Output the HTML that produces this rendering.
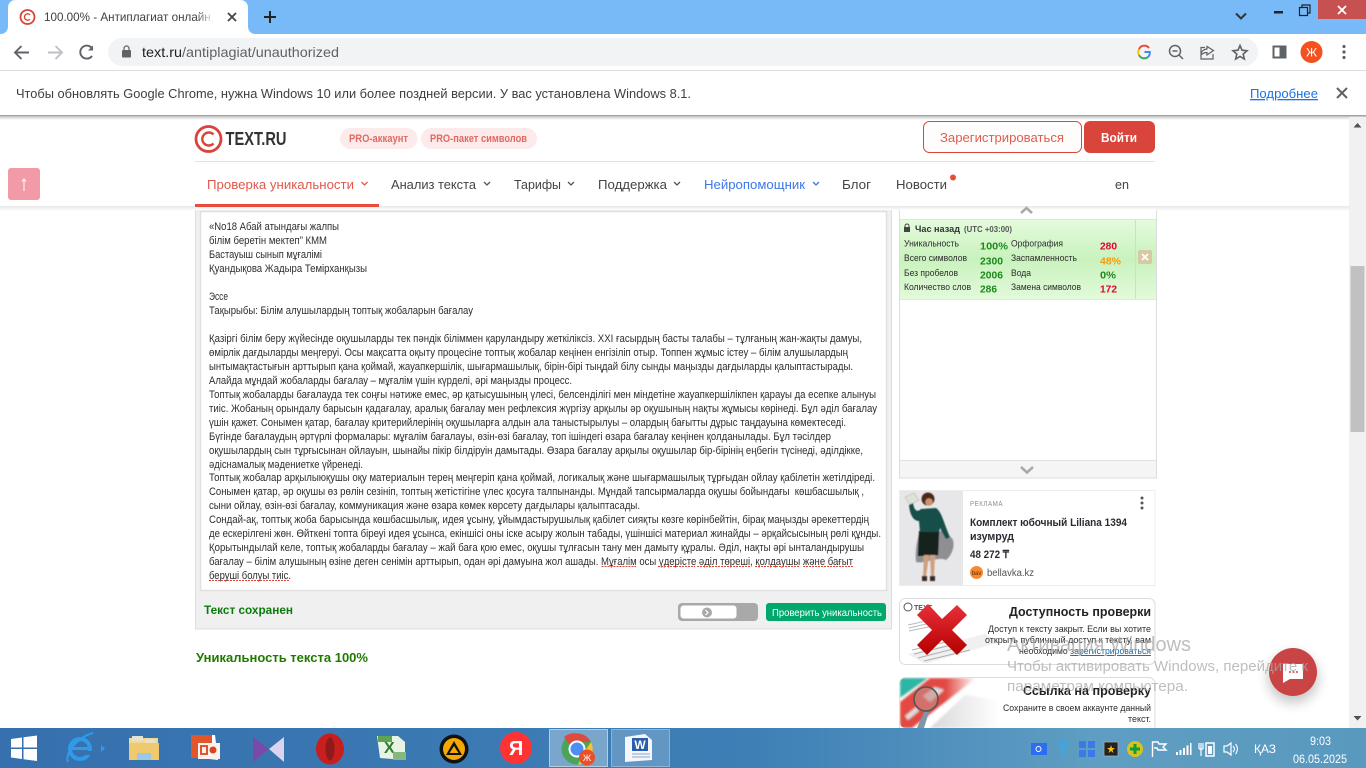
<!DOCTYPE html>
<html lang="ru"><head><meta charset="utf-8"><title>100.00% - Антиплагиат онлайн</title>
<style>
html,body{margin:0;padding:0;width:1366px;height:768px;overflow:hidden;background:#fff}
svg{display:block}
text{font-family:"Liberation Sans",sans-serif;white-space:pre}
.b text{font-size:10.6px;fill:#2e2e2e}
.n text{font-size:13px;fill:#444}
.s text{font-size:9.6px;fill:#2b2b2b}
.v text{font-size:10.5px;font-weight:bold}
.r text{font-size:9.6px;fill:#2b2b2b}
.w text{fill:#a8a8a8;fill-opacity:.75}
</style></head><body>
<svg width="1366" height="768" viewBox="0 0 1366 768" xmlns="http://www.w3.org/2000/svg">
<defs>
<linearGradient id="sh" x1="0" y1="0" x2="0" y2="1"><stop offset="0" stop-color="#8f8f8f"/><stop offset=".35" stop-color="#cfcfcf"/><stop offset="1" stop-color="#fff"/></linearGradient>
<linearGradient id="ns" x1="0" y1="0" x2="0" y2="1"><stop offset="0" stop-color="#e6e6e6"/><stop offset="1" stop-color="#fff"/></linearGradient>
<linearGradient id="gr" x1="0" y1="0" x2="0" y2="1"><stop offset="0" stop-color="#e4fbdc"/><stop offset=".5" stop-color="#c9f2bd"/><stop offset="1" stop-color="#e2fada"/></linearGradient>
<linearGradient id="tb" x1="0" y1="0" x2="1" y2="0"><stop offset="0" stop-color="#3670ae"/><stop offset=".55" stop-color="#3e7fb6"/><stop offset=".8" stop-color="#5f9ec2"/><stop offset="1" stop-color="#5a99bf"/></linearGradient>
<linearGradient id="fade" x1="0" y1="0" x2="1" y2="0"><stop offset="0" stop-color="#fff" stop-opacity="0"/><stop offset="1" stop-color="#fff"/></linearGradient>
<linearGradient id="xr" x1="0" y1="0" x2="0" y2="1"><stop offset="0" stop-color="#e8303a"/><stop offset="1" stop-color="#b40000"/></linearGradient>
<linearGradient id="band" x1="0" y1="0" x2="1" y2="0"><stop offset="0" stop-color="#e24a42"/><stop offset=".6" stop-color="#e24a42"/><stop offset="1" stop-color="#e24a42" stop-opacity="0"/></linearGradient>
<linearGradient id="gry" x1="0" y1="0" x2="1" y2="0"><stop offset="0" stop-color="#c8c8c8"/><stop offset="1" stop-color="#fff"/></linearGradient>
<filter id="chs" x="-50%" y="-50%" width="200%" height="200%"><feGaussianBlur stdDeviation="6"/></filter>
<filter id="bl" x="-20%" y="-20%" width="140%" height="140%"><feGaussianBlur stdDeviation=".6"/></filter>
<filter id="bl2" x="-20%" y="-20%" width="140%" height="140%"><feGaussianBlur stdDeviation="1"/></filter>
<clipPath id="c2"><rect x="900" y="599" width="100" height="64" rx="5"/></clipPath>
<clipPath id="c3"><rect x="900" y="678" width="100" height="50" rx="5"/></clipPath>
</defs>

<!-- Tab strip -->
<rect width="1366" height="34" fill="#78b9f8"/>
<path d="M0 34 C6 34 8 30 8 26 V8 C8 3 11 0 16 0 H240 C245 0 248 3 248 8 V26 C248 30 250 34 256 34 Z" fill="#fff"/>
<circle cx="27.500" cy="17" r="7" fill="none" stroke="#d9433a" stroke-width="1.800"/>
<path d="M30 14.800 A3.200 3.200 0 1 0 30 19.200" fill="none" stroke="#d9433a" stroke-width="1.400"/>
<text x="44" y="21" font-size="12" fill="#3c4043" textLength="170" lengthAdjust="spacingAndGlyphs">100.00% - Антиплагиат онлайн,</text>
<rect x="196" y="8" width="18" height="18" fill="url(#fade)"/>
<path d="M228 13 L236 21 M236 13 L228 21" stroke="#444" stroke-width="1.800"/>
<path d="M270 11 V23 M264 17 H276" stroke="#222" stroke-width="2"/>
<path d="M1236 13.500 L1241 18.500 L1246 13.500" fill="none" stroke="#333" stroke-width="2"/>
<rect x="1274" y="11" width="9" height="2.500" fill="#222"/>
<path d="M1299.500 7.500 H1307.500 V15.500 H1299.500 Z M1302 7.500 V5 H1310 V13 H1307.500" fill="none" stroke="#222" stroke-width="1.200"/>
<rect x="1318" y="0" width="48" height="19" fill="#c75050"/>
<path d="M1338 6 L1346 14 M1346 6 L1338 14" stroke="#fff" stroke-width="1.800"/>

<!-- Toolbar -->
<rect y="34" width="1366" height="36" fill="#fff"/>
<rect y="70" width="1366" height="1" fill="#dadce0"/>
<path d="M29 52.500 H15 M21.500 46 L15 52.500 L21.500 59" fill="none" stroke="#5f6368" stroke-width="1.900"/>
<path d="M48 52.500 H62 M55.500 46 L62 52.500 L55.500 59" fill="none" stroke="#bdc1c6" stroke-width="1.900"/>
<path d="M92 56 A6.500 6.500 0 1 1 92.500 49" fill="none" stroke="#5f6368" stroke-width="1.900"/><path d="M93 45.500 V50.500 H88 Z" fill="#5f6368"/>
<rect x="108" y="38" width="1150" height="28" rx="14" fill="#f1f3f4"/>
<rect x="122" y="50" width="9" height="7.500" rx="1" fill="#5f6368"/><path d="M124 50 V48.500 A2.500 2.500 0 0 1 129 48.500 V50" fill="none" stroke="#5f6368" stroke-width="1.200"/>
<text x="142" y="57" font-size="14" fill="#5f6368" textLength="197" lengthAdjust="spacingAndGlyphs"><tspan fill="#202124">text.ru</tspan>/antiplagiat/unauthorized</text>
<!-- G -->
<path d="M1149 48 A5.800 5.800 0 0 0 1139 49.200" fill="none" stroke="#ea4335" stroke-width="1.900"/>
<path d="M1139 49.200 A5.800 5.800 0 0 0 1139 55" fill="none" stroke="#fbbc05" stroke-width="1.900"/>
<path d="M1139 55 A5.800 5.800 0 0 0 1148 57" fill="none" stroke="#34a853" stroke-width="1.900"/>
<path d="M1148 57 A5.800 5.800 0 0 0 1149.800 52 H1144.500" fill="none" stroke="#4285f4" stroke-width="1.900"/>
<circle cx="1175" cy="51" r="5.500" fill="none" stroke="#5f6368" stroke-width="1.500"/><path d="M1179 55 L1183 59 M1172.500 51 H1177.500" stroke="#5f6368" stroke-width="1.500"/>
<path d="M1207 46.500 V49 C1203 49.500 1201 52 1201 55 C1203 53 1205 52.500 1207 52.500 V55 L1213.500 50.500 Z M1205 47.500 H1201 V59 H1213 V54" fill="none" stroke="#5f6368" stroke-width="1.200"/>
<path d="M1240 45.500 L1242 50.200 L1247 50.700 L1243.200 54 L1244.300 59 L1240 56.400 L1235.700 59 L1236.800 54 L1233 50.700 L1238 50.200 Z" fill="none" stroke="#5f6368" stroke-width="1.600"/>
<rect x="1273.500" y="46.500" width="12" height="11" fill="none" stroke="#5f6368" stroke-width="2"/><rect x="1279.500" y="46" width="6.500" height="12" fill="#5f6368"/>
<circle cx="1311.500" cy="52" r="11" fill="#f4511e"/>
<text x="1311.500" y="56.500" font-size="12" fill="#fff" text-anchor="middle">Ж</text>
<circle cx="1344" cy="46.500" r="1.600" fill="#5f6368"/><circle cx="1344" cy="52" r="1.600" fill="#5f6368"/><circle cx="1344" cy="57.500" r="1.600" fill="#5f6368"/>

<!-- Infobar -->
<text x="16" y="98" font-size="13" fill="#3c4043" textLength="675" lengthAdjust="spacingAndGlyphs">Чтобы обновлять Google Chrome, нужна Windows 10 или более поздней версии. У вас установлена Windows 8.1.</text>
<text x="1250" y="98" font-size="13" fill="#1a73e8" text-decoration="underline" textLength="68" lengthAdjust="spacingAndGlyphs">Подробнее</text>
<path d="M1337 88 L1347 98 M1347 88 L1337 98" stroke="#5f6368" stroke-width="2"/>
<rect y="115" width="1366" height="5" fill="url(#sh)"/>

<!-- Scrollbar -->
<rect x="1349" y="117" width="17" height="611" fill="#f1f1f1"/>
<rect x="1350.500" y="266" width="14" height="166" fill="#c1c1c1"/>
<path d="M1353.500 127.500 H1361.500 L1357.500 123 Z M1353.500 716 H1361.500 L1357.500 720.500 Z" fill="#505050"/>

<!-- Logo and header -->
<circle cx="208.500" cy="139" r="12.500" fill="none" stroke="#d9433a" stroke-width="2.800"/>
<path d="M213.500 134.500 A6.500 6.500 0 1 0 213.500 143.500" fill="none" stroke="#d9433a" stroke-width="2.400"/>
<text x="225.500" y="145" font-size="18" font-weight="bold" fill="#333" textLength="61" lengthAdjust="spacingAndGlyphs">TEXT.RU</text>
<rect x="340" y="128" width="77.500" height="21" rx="10.500" fill="#fdeaea"/>
<rect x="421" y="128" width="116" height="21" rx="10.500" fill="#fdeaea"/>
<text x="349" y="142" font-size="11" font-weight="bold" fill="#e06a63" textLength="59" lengthAdjust="spacingAndGlyphs">PRO-аккаунт</text>
<text x="430" y="142" font-size="11" font-weight="bold" fill="#e06a63" textLength="97" lengthAdjust="spacingAndGlyphs">PRO-пакет символов</text>
<rect x="923.500" y="121.500" width="158" height="31" rx="6" fill="#fffdfb" stroke="#d9453a"/>
<text x="940" y="142" font-size="13" fill="#e25b50" textLength="124" lengthAdjust="spacingAndGlyphs">Зарегистрироваться</text>
<rect x="1084" y="121" width="71" height="32" rx="6" fill="#d9453a"/>
<text x="1101" y="142" font-size="12.500" font-weight="bold" fill="#fff" textLength="36" lengthAdjust="spacingAndGlyphs">Войти</text>
<rect x="195" y="161" width="960" height="1" fill="#e2e2e2"/>

<!-- Nav -->
<g class="n">
<text x="207" y="189" style="fill:#e0584c" textLength="147" lengthAdjust="spacingAndGlyphs">Проверка уникальности</text>
<text x="391" y="189" textLength="85" lengthAdjust="spacingAndGlyphs">Анализ текста</text>
<text x="514" y="189" textLength="47" lengthAdjust="spacingAndGlyphs">Тарифы</text>
<text x="598" y="189" textLength="69" lengthAdjust="spacingAndGlyphs">Поддержка</text>
<text x="704" y="189" style="fill:#3b78e7" textLength="101" lengthAdjust="spacingAndGlyphs">Нейропомощник</text>
<text x="842" y="189" textLength="29" lengthAdjust="spacingAndGlyphs">Блог</text>
<text x="896" y="189" textLength="51" lengthAdjust="spacingAndGlyphs">Новости</text>
<text x="1115" y="189" textLength="14" lengthAdjust="spacingAndGlyphs">en</text>
</g>
<path d="M361.500 182 L364.500 185 L367.500 182" fill="none" stroke="#e0584c" stroke-width="1.300"/>
<path d="M484 182 L487 185 L490 182 M568 182 L571 185 L574 182 M674 182 L677 185 L680 182" fill="none" stroke="#555" stroke-width="1.300"/>
<path d="M813 182 L816 185 L819 182" fill="none" stroke="#3b78e7" stroke-width="1.300"/>
<circle cx="953" cy="177.500" r="3" fill="#e74c3c"/>
<rect x="8" y="168" width="32" height="32" rx="3" fill="#f39aa8"/>
<path d="M24 191 V179 M22 181.500 L24 179 L26 181.500" fill="none" stroke="#fff" stroke-width="1"/>
<rect y="206" width="1349" height="5" fill="url(#ns)"/>

<!-- Main panel -->
<rect x="195.500" y="208" width="696" height="421" fill="#f0f0f0" stroke="#dedede"/>
<rect x="200.500" y="211.500" width="686" height="379" fill="#fff" stroke="#e0e0e0" stroke-width="1.500"/>
<rect x="195" y="206" width="697" height="4" fill="url(#ns)"/>
<rect x="195" y="204" width="184" height="3" fill="#e74c3c"/>

<g class="b">
<text x="209" y="230" textLength="130" lengthAdjust="spacingAndGlyphs">«No18 Абай атындағы жалпы</text>
<text x="209" y="244" textLength="118" lengthAdjust="spacingAndGlyphs">білім беретін мектеп” КММ</text>
<text x="209" y="258" textLength="113" lengthAdjust="spacingAndGlyphs">Бастауыш сынып мұғалімі</text>
<text x="209" y="272" textLength="158" lengthAdjust="spacingAndGlyphs">Қуандықова Жадыра Темірханқызы</text>
<text x="209" y="300" textLength="19" lengthAdjust="spacingAndGlyphs">Эссе</text>
<text x="209" y="314" textLength="264" lengthAdjust="spacingAndGlyphs">Тақырыбы: Білім алушылардың топтық жобаларын бағалау</text>
<text x="209" y="342" textLength="653" lengthAdjust="spacingAndGlyphs">Қазіргі білім беру жүйесінде оқушыларды тек пәндік біліммен қаруландыру жеткіліксіз. XXI ғасырдың басты талабы – тұлғаның жан-жақты дамуы,</text>
<text x="209" y="356" textLength="639" lengthAdjust="spacingAndGlyphs">өмірлік дағдыларды меңгеруі. Осы мақсатта оқыту процесіне топтық жобалар кеңінен енгізіліп отыр. Топпен жұмыс істеу – білім алушылардың</text>
<text x="209" y="370" textLength="644" lengthAdjust="spacingAndGlyphs">ынтымақтастығын арттырып қана қоймай, жауапкершілік, шығармашылық, бірін-бірі тыңдай білу сынды маңызды дағдыларды қалыптастырады.</text>
<text x="209" y="384" textLength="363" lengthAdjust="spacingAndGlyphs">Алайда мұндай жобаларды бағалау – мұғалім үшін күрделі, әрі маңызды процесс.</text>
<text x="209" y="398" textLength="667" lengthAdjust="spacingAndGlyphs">Топтық жобаларды бағалауда тек соңғы нәтиже емес, әр қатысушының үлесі, белсенділігі мен міндетіне жауапкершілікпен қарауы да есепке алынуы</text>
<text x="209" y="412" textLength="668" lengthAdjust="spacingAndGlyphs">тиіс. Жобаның орындалу барысын қадағалау, аралық бағалау мен рефлексия жүргізу арқылы әр оқушының нақты жұмысы көрінеді. Бұл әділ бағалау</text>
<text x="209" y="426" textLength="637" lengthAdjust="spacingAndGlyphs">үшін қажет. Сонымен қатар, бағалау критерийлерінің оқушыларға алдын ала таныстырылуы – олардың бағытты дұрыс таңдауына көмектеседі.</text>
<text x="209" y="440" textLength="622" lengthAdjust="spacingAndGlyphs">Бүгінде бағалаудың әртүрлі формалары: мұғалім бағалауы, өзін-өзі бағалау, топ ішіндегі өзара бағалау кеңінен қолданылады. Бұл тәсілдер</text>
<text x="209" y="454" textLength="654" lengthAdjust="spacingAndGlyphs">оқушылардың сын тұрғысынан ойлауын, шынайы пікір білдіруін дамытады. Өзара бағалау арқылы оқушылар бір-бірінің еңбегін түсінеді, әділдікке,</text>
<text x="209" y="468" textLength="154" lengthAdjust="spacingAndGlyphs">әдіснамалық мәдениетке үйренеді.</text>
<text x="209" y="481" textLength="666" lengthAdjust="spacingAndGlyphs">Топтық жобалар арқылыюқушы оқу материалын терең меңгеріп қана қоймай, логикалық және шығармашылық тұрғыдан ойлау қабілетін жетілдіреді.</text>
<text x="209" y="495" textLength="655" lengthAdjust="spacingAndGlyphs">Сонымен қатар, әр оқушы өз рөлін сезініп, топтың жетістігіне үлес қосуға талпынанды. Мұндай тапсырмаларда оқушы бойындағы  көшбасшылық ,</text>
<text x="209" y="509" textLength="431" lengthAdjust="spacingAndGlyphs">сыни ойлау, өзін-өзі бағалау, коммуникация және өзара көмек көрсету дағдылары қалыптасады.</text>
<text x="209" y="523" textLength="660" lengthAdjust="spacingAndGlyphs">Сондай-ақ, топтық жоба барысында көшбасшылық, идея ұсыну, ұйымдастырушылық қабілет сияқты көзге көрінбейтін, бірақ маңызды әрекеттердің</text>
<text x="209" y="537" textLength="672" lengthAdjust="spacingAndGlyphs">де ескерілгені жөн. Өйткені топта біреуі идея ұсынса, екіншісі оны іске асыру жолын табады, үшіншісі материал жинайды – әрқайсысының рөлі құнды.</text>
<text x="209" y="551" textLength="655" lengthAdjust="spacingAndGlyphs">Қорытындылай келе, топтық жобаларды бағалау – жай баға қою емес, оқушы тұлғасын тану мен дамыту құралы. Әділ, нақты әрі ынталандырушы</text>
<text x="209" y="565" textLength="644" lengthAdjust="spacingAndGlyphs">бағалау – білім алушының өзіне деген сенімін арттырып, одан әрі дамуына жол ашады. Мұғалім осы үдерісте әділ төреші, қолдаушы және бағыт</text>
<text x="209" y="579" textLength="82" lengthAdjust="spacingAndGlyphs">беруші болуы тиіс.</text>
</g>
<path d="M601.500 566.500 H636 M658 566.500 H695 M697 566.500 H750 M755 566.500 H799 M803 566.500 H853 M209 580.500 H289" stroke="#e0443a" stroke-width="1" stroke-dasharray="2 1" fill="none"/>

<text x="204" y="614" font-size="11.500" font-weight="bold" fill="#0a7a0a" textLength="89" lengthAdjust="spacingAndGlyphs">Текст сохранен</text>
<rect x="678" y="603" width="80" height="18" rx="4" fill="#a9a9a9"/>
<rect x="680.500" y="605.500" width="56" height="13" rx="3" fill="#fff"/>
<circle cx="707" cy="612.500" r="5" fill="#a9a9a9"/><path d="M705.500 610 L708 612.500 L705.500 615" fill="none" stroke="#fff" stroke-width="1.200"/>
<rect x="766" y="603" width="120" height="18" rx="3" fill="#00a86b"/>
<text x="772" y="616" font-size="10.500" fill="#fff" textLength="110" lengthAdjust="spacingAndGlyphs">Проверить уникальность</text>
<text x="196" y="662" font-size="13" font-weight="bold" fill="#1f7a00" textLength="172" lengthAdjust="spacingAndGlyphs">Уникальность текста 100%</text>

<!-- Right widget -->
<rect x="899.500" y="207" width="257" height="271" fill="#fff" stroke="#dedede"/>
<rect x="899" y="206" width="258" height="4" fill="url(#ns)"/>
<path d="M1021 213 L1026.500 208 L1032 213" fill="none" stroke="#aaa" stroke-width="2.600"/>
<rect x="900" y="220" width="256" height="79" fill="url(#gr)"/>
<rect x="900" y="219" width="256" height="1" fill="#d9e8d4"/><rect x="900" y="299" width="256" height="1" fill="#e6e6e6"/>
<rect x="1135" y="220" width="1" height="79" fill="#c9e2c2"/>
<rect x="1138" y="250" width="14" height="14" rx="2" fill="#d6c9a4"/>
<path d="M1142 254 L1148 260 M1148 254 L1142 260" stroke="#fff" stroke-width="1.800"/>
<rect x="904" y="227" width="6" height="5" fill="#444"/><path d="M905 227 V226 A2 2 0 0 1 909 226 V227" fill="none" stroke="#444" stroke-width="1"/>
<text x="915" y="232" font-size="9.500" font-weight="bold" fill="#333" textLength="45" lengthAdjust="spacingAndGlyphs">Час назад</text>
<text x="964" y="232" font-size="8" font-weight="bold" fill="#555" textLength="48" lengthAdjust="spacingAndGlyphs">(UTC +03:00)</text>
<g class="s">
<text x="904" y="246.500" textLength="55" lengthAdjust="spacingAndGlyphs">Уникальность</text>
<text x="904" y="261" textLength="63" lengthAdjust="spacingAndGlyphs">Всего символов</text>
<text x="904" y="276" textLength="54" lengthAdjust="spacingAndGlyphs">Без пробелов</text>
<text x="904" y="290" textLength="67" lengthAdjust="spacingAndGlyphs">Количество слов</text>
<text x="1011" y="246.500" textLength="52" lengthAdjust="spacingAndGlyphs">Орфография</text>
<text x="1011" y="261" textLength="66" lengthAdjust="spacingAndGlyphs">Заспамленность</text>
<text x="1011" y="276" textLength="20" lengthAdjust="spacingAndGlyphs">Вода</text>
<text x="1011" y="290" textLength="70" lengthAdjust="spacingAndGlyphs">Замена символов</text>
</g>
<g class="v">
<text x="980" y="249.500" fill="#1a8a1a" textLength="28" lengthAdjust="spacingAndGlyphs">100%</text>
<text x="980" y="264.500" fill="#1a8a1a" textLength="23" lengthAdjust="spacingAndGlyphs">2300</text>
<text x="980" y="278.500" fill="#1a8a1a" textLength="23" lengthAdjust="spacingAndGlyphs">2006</text>
<text x="980" y="292.500" fill="#1a8a1a" textLength="17" lengthAdjust="spacingAndGlyphs">286</text>
<text x="1100" y="249.500" fill="#e8002d" textLength="17" lengthAdjust="spacingAndGlyphs">280</text>
<text x="1100" y="264.500" fill="#f39c12" textLength="21" lengthAdjust="spacingAndGlyphs">48%</text>
<text x="1100" y="278.500" fill="#1a8a1a" textLength="16" lengthAdjust="spacingAndGlyphs">0%</text>
<text x="1100" y="292.500" fill="#e8002d" textLength="17" lengthAdjust="spacingAndGlyphs">172</text>
</g>
<rect x="900" y="461" width="256" height="16.500" fill="#f5f5f5"/><rect x="900" y="460" width="256" height="1" fill="#e2e2e2"/>
<path d="M1021 467 L1027 472.500 L1033 467" fill="none" stroke="#aaa" stroke-width="2.600"/>

<!-- Ad -->
<rect x="899.500" y="490.500" width="255.500" height="95" fill="#fff" stroke="#ececec"/>
<rect x="900" y="491" width="63" height="94" fill="#e7e7e9"/>
<g filter="url(#bl)">
<path d="M905 497 L914 493 L919 500 L910 505 Z" fill="#dfe2d6" stroke="#b5b8aa" stroke-width=".6"/>
<path d="M916 562 C915 550 917 540 920 531 L942 531 C948 534 952 538 953 540 C955 548 951 556 946 560 C938 556 926 564 916 562Z" fill="#3a3a3c" opacity=".5"/>
<path d="M919 531 L939 531 L938 555 L918 556 Z" fill="#15201f"/>
<path d="M909 505 L913 503 C914 510 917 513 921 509 L936 508 C942 512 944 524 950 537 L946 539 L940 528 L939 532 L920 532 L919 521 C914 521 910 516 909 505Z" fill="#17504a"/>
<circle cx="928" cy="499" r="6.500" fill="#4b2a1c"/>
<circle cx="929" cy="502" r="3.800" fill="#c9936f"/>
<path d="M924 555 L923 577 L926 577 L929 555 Z M930 555 L931 577 L934 577 L935 555Z" fill="#cfa07f"/>
<path d="M922 576 H927 V581 H922Z M930 576 H935 V581 H930Z" fill="#3a2c26"/>
</g>
<text x="970" y="506" font-size="7" fill="#8b8b99" letter-spacing=".6" textLength="33" lengthAdjust="spacingAndGlyphs">РЕКЛАМА</text>
<circle cx="1142" cy="498" r="1.500" fill="#555"/><circle cx="1142" cy="503" r="1.500" fill="#555"/><circle cx="1142" cy="508" r="1.500" fill="#555"/>
<text x="970" y="526" font-size="11" font-weight="bold" fill="#2b2b33" textLength="157" lengthAdjust="spacingAndGlyphs">Комплект юбочный Liliana 1394</text>
<text x="970" y="540" font-size="11" font-weight="bold" fill="#2b2b33" textLength="44" lengthAdjust="spacingAndGlyphs">изумруд</text>
<text x="970" y="558" font-size="11" font-weight="bold" fill="#2b2b33" textLength="39" lengthAdjust="spacingAndGlyphs">48 272 ₸</text>
<circle cx="976.500" cy="572.500" r="6.500" fill="#f78a2f"/>
<text x="976.500" y="575" font-size="6" fill="#5a2a10" text-anchor="middle">bav</text>
<text x="987" y="576" font-size="10" fill="#555" textLength="47" lengthAdjust="spacingAndGlyphs">bellavka.kz</text>

<!-- Card 2 -->
<rect x="899.500" y="598.500" width="255.500" height="66" rx="6" fill="#fff" stroke="#dcdcdc"/>
<g clip-path="url(#c2)">
<circle cx="908" cy="607" r="4" fill="none" stroke="#555" stroke-width="1"/>
<text x="914" y="610" font-size="7" font-weight="bold" fill="#555">TEXT</text>
<path d="M908 625 L935 619 M909 628 L935 622 M909 631 L933 626" stroke="#bbb" stroke-width="1"/>
<path d="M908 654 L985 634 L1000 642 L925 664 Z" fill="#f0f0f0"/>
<path d="M912 650 L950 641 M914 654 L960 643 M918 658 L965 646 M924 661 L970 650" stroke="#999" stroke-width="1" opacity=".75"/>
</g>
<path d="M928 604 L942 619 L957 605 L967 615 L952 630 L967 645 L957 655 L942 640 L927 655 L917 645 L932 630 L917 615 Z" fill="url(#xr)"/>
<text x="1151" y="616" text-anchor="end" font-size="13" font-weight="bold" fill="#222" textLength="142" lengthAdjust="spacingAndGlyphs">Доступность проверки</text>
<g class="r">
<text x="988" y="632" textLength="163" lengthAdjust="spacingAndGlyphs">Доступ к тексту закрыт. Если вы хотите</text>
<text x="985" y="643" textLength="166" lengthAdjust="spacingAndGlyphs">открыть публичный доступ к тексту, вам</text>
<text x="1019" y="654" textLength="132" lengthAdjust="spacingAndGlyphs">необходимо <tspan fill="#1a6aa5" text-decoration="underline">зарегистрироваться</tspan></text>
</g>

<!-- Card 3 -->
<path d="M899.500 728 V683 A6 6 0 0 1 905.500 677.500 H1149 A6 6 0 0 1 1155 683 V728" fill="#fff" stroke="#dcdcdc"/>
<g clip-path="url(#c3)"><g filter="url(#bl2)">
<path d="M930 728 L965 695 L1000 700 V728 Z" fill="url(#gry)" opacity=".7"/>
<path d="M900 678 H928 L900 698 Z" fill="#2fb5a4"/>
<path d="M900 702 L930 678 H976 L912 728 H900 Z" fill="url(#band)"/>
<path d="M905 716 L916 707 L919 711 L908 720 Z" fill="#ddd"/>
<path d="M923 696 L935 687 L944 690 L930 702 Z" fill="#ddd"/>
</g>
<circle cx="926" cy="699" r="12" fill="#c98a84" fill-opacity=".6" stroke="#555" stroke-width="1.600"/>
<path d="M924 712 L917 728 H924 L929 712 Z" fill="#7f96a6"/>
</g>
<text x="1151" y="695" text-anchor="end" font-size="13" font-weight="bold" fill="#222" textLength="128" lengthAdjust="spacingAndGlyphs">Ссылка на проверку</text>
<g class="r">
<text x="1003" y="711" textLength="148" lengthAdjust="spacingAndGlyphs">Сохраните в своем аккаунте данный</text>
<text x="1128" y="722" textLength="23" lengthAdjust="spacingAndGlyphs">текст.</text>
</g>

<!-- Chat -->
<circle cx="1293" cy="678" r="25" fill="#000" opacity=".22" filter="url(#chs)"/>
<circle cx="1293" cy="672" r="24" fill="#c94444"/>
<path d="M1283 664 H1303 V679 H1290 L1283 683 Z" fill="#fff"/>
<path d="M1289 672 H1291 M1292.500 672 H1294.500 M1296 672 H1298" stroke="#c94444" stroke-width="1.600"/>

<!-- Taskbar -->
<rect y="728" width="1366" height="40" fill="url(#tb)"/>
<path d="M11 739 L22 737.500 V747.500 H11 Z M23.500 737.300 L37 735.500 V747.500 H23.500 Z M11 749 H22 V759 L11 757.500 Z M23.500 749 H37 V761 L23.500 759.200 Z" fill="#fff"/>
<!-- IE -->
<ellipse cx="80" cy="749" rx="10" ry="10" fill="none" stroke="#2f9be8" stroke-width="4"/>
<rect x="70" y="747" width="20" height="3" fill="#2f9be8"/><rect x="80" y="751" width="13" height="4" fill="#3670ae"/>
<path d="M68 762 C64 752 80 736 93 733" fill="none" stroke="#2f9be8" stroke-width="2"/>
<path d="M101 745 L105 748.500 L101 752 Z" fill="#2f9be8"/>
<!-- Folder -->
<path d="M129 738 H158 V760 H129 Z" fill="#f2d98c"/>
<rect x="132" y="736" width="11" height="5" fill="#e6e2d0"/><rect x="145" y="739" width="10" height="4" fill="#e6e2d0"/>
<rect x="129" y="743" width="30" height="17" fill="#f0c96e"/>
<path d="M137 753 H151 V760 H137 Z" fill="#9cc8e8"/>
<!-- PPT -->
<path d="M192 735 H215 L218 760 L192 757 Z" fill="#fff"/>
<rect x="191" y="735" width="21" height="23" fill="#e2562c"/>
<rect x="198" y="743" width="22" height="16" fill="#fbf2ee"/>
<circle cx="213" cy="750" r="3.500" fill="#d9441e"/>
<path d="M201 746 H207 V754 H201 Z" fill="none" stroke="#d9441e" stroke-width="1.800"/>
<!-- KMP -->
<path d="M253 737 L269 749 L253 762 Z" fill="#7a4aa8"/><path d="M284 737 L269 749 L284 762 Z" fill="#dcd4ee"/>
<!-- Opera -->
<ellipse cx="330" cy="749" rx="14" ry="15.500" fill="#c81e1e"/><ellipse cx="330" cy="749" rx="4.500" ry="11.500" fill="#8e1a1a"/>
<!-- Excel -->
<path d="M377 736 H398 L405 742 V760 L380 758 Z" fill="#e9f3e3"/>
<path d="M378 736 H392 V742 H378Z" fill="#5da455"/>
<text x="384" y="753" font-size="16" font-weight="bold" fill="#2f7d2f" font-family="Liberation Serif">X</text>
<path d="M393 752 H406 V760 H393Z" fill="#85b77e"/>
<!-- AIMP -->
<circle cx="454" cy="749" r="14.500" fill="#111"/><circle cx="454" cy="749" r="11" fill="#f5a800"/>
<path d="M454 741 L462 755 H446 Z M454 746 L449.500 753 H458.500 Z" fill="#111" fill-rule="evenodd"/>
<!-- Yandex -->
<circle cx="516" cy="748" r="16" fill="#f33"/>
<text x="516" y="755" font-size="20" font-weight="bold" fill="#fff" text-anchor="middle">Я</text>
<!-- active boxes -->
<rect x="549.500" y="729.500" width="58" height="37" fill="#fff" fill-opacity=".32" stroke="#c9dbe9" stroke-opacity=".8"/>
<rect x="611.500" y="729.500" width="58" height="37" fill="#fff" fill-opacity=".2" stroke="#b9cfe2" stroke-opacity=".6"/>
<!-- Chrome -->
<circle cx="577" cy="749" r="15.500" fill="#4aa55a"/>
<path d="M577 733.500 A15.500 15.500 0 0 1 591 742 H577 A7 7 0 0 0 570.500 746 L564 737 A15.500 15.500 0 0 1 577 733.500Z" fill="#dd4b3e"/>
<path d="M591 742 A15.500 15.500 0 0 1 578 764.500 L584 752 Z" fill="#fbc02d"/>
<circle cx="577" cy="749" r="7.500" fill="#4d8ef5" stroke="#fff" stroke-width="2"/>
<circle cx="587" cy="757.500" r="8" fill="#e8502a"/>
<text x="587" y="761" font-size="9" fill="#fff" text-anchor="middle">Ж</text>
<!-- Word -->
<path d="M625 737 L645 734 L652 740 V760 L625 762 Z" fill="#f4f6fb"/>
<rect x="632" y="738" width="16" height="13" fill="#2b5fad"/>
<text x="640" y="749" font-size="12" font-weight="bold" fill="#fff" text-anchor="middle">W</text>
<path d="M632 754 H650 M632 757 H650" stroke="#8aa5cf"/>

<!-- Tray -->
<rect x="1031" y="743" width="16" height="12" fill="#2d6df0"/><circle cx="1038.500" cy="749" r="2.500" fill="none" stroke="#fff"/>
<circle cx="1063" cy="744.500" r="3.500" fill="none" stroke="#35a8f0" stroke-width="2"/><path d="M1063 748 V756" stroke="#35a8f0" stroke-width="2"/>
<path d="M1079 741 H1086 V748 H1079Z M1088 741 H1095 V748 H1088Z M1079 750 H1086 V757 H1079Z M1088 750 H1095 V757 H1088Z" fill="#3b78e8"/>
<rect x="1104" y="742" width="14" height="14" fill="#222" stroke="#aaa" stroke-width=".8"/><path d="M1111 745 L1112 748 H1115 L1112.500 750 L1113.500 753 L1111 751 L1108.500 753 L1109.500 750 L1107 748 H1110Z" fill="#f5c518"/>
<circle cx="1135" cy="749" r="8" fill="#d7c21e"/><path d="M1135 744 V754 M1130 749 H1140" stroke="#0f9d3a" stroke-width="3"/>
<path d="M1152.500 757 V742 H1158 L1159 744 H1166 L1163 747 L1166 750 H1158 L1157 748 H1154" fill="none" stroke="#fff" stroke-width="1.400"/>
<path d="M1176 752 H1178 V755 H1176Z M1179.500 750 H1181.500 V755 H1179.500Z M1183 748 H1185 V755 H1183Z M1186.500 745.500 H1188.500 V755 H1186.500Z M1190 743 H1191.500 V755 H1190Z" fill="#fff"/>
<rect x="1206" y="743" width="8" height="13" fill="none" stroke="#fff" stroke-width="1.500"/><rect x="1208" y="746" width="4" height="8" fill="#fff"/><path d="M1201 743 V756 M1199 743 V749 M1203 743 V749 M1199 749 H1203" stroke="#fff" stroke-width="1.200" fill="none"/>
<path d="M1224 746 H1227 L1231 743 V755 L1227 752 H1224Z" fill="none" stroke="#fff" stroke-width="1.200"/><path d="M1233 746 C1235 748 1235 750 1233 752 M1235.500 744 C1238 747 1238 751 1235.500 754" fill="none" stroke="#fff" stroke-width="1.100"/>
<text x="1254" y="753" font-size="12" fill="#fff" textLength="22" lengthAdjust="spacingAndGlyphs">ҚАЗ</text>
<text x="1310" y="745" font-size="12" fill="#fff" textLength="21" lengthAdjust="spacingAndGlyphs">9:03</text>
<text x="1293" y="763" font-size="12" fill="#fff" textLength="54" lengthAdjust="spacingAndGlyphs">06.05.2025</text>

<!-- Watermark -->
<g class="w">
<text x="1007" y="651" font-size="20" textLength="184" lengthAdjust="spacingAndGlyphs">Активация Windows</text>
<text x="1007" y="671" font-size="14.500" textLength="301" lengthAdjust="spacingAndGlyphs">Чтобы активировать Windows, перейдите к</text>
<text x="1007" y="691" font-size="14.500" textLength="181" lengthAdjust="spacingAndGlyphs">параметрам компьютера.</text>
</g>
</svg>
</body></html>
